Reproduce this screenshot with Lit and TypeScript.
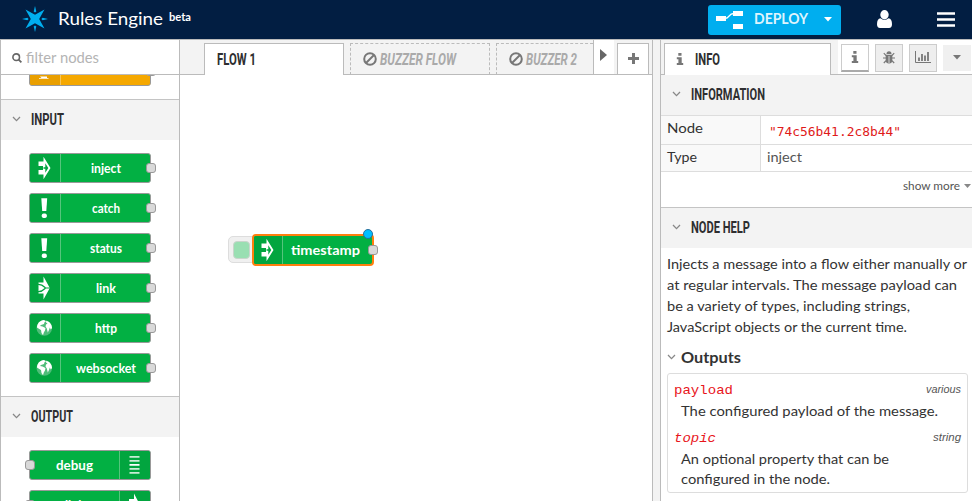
import { LitElement, html, svg, css, nothing } from "lit";
import { customElement, property } from "lit/decorators.js";

// A single line of text set to an exact advance width, capitals centred in the line box.
const line = (text: string, width: number, size: number, cls = "", height = 20) => html`
  <svg class="line" width=${width} height=${height}>
    <text class=${cls} x="0" y=${height / 2 + size * 0.36} font-size=${size}
      textLength=${width} lengthAdjust="spacingAndGlyphs">${text}</text>
  </svg>`;

const textStyles = css`
  svg { display: block; flex: none; overflow: visible; }
  .line { font-family: Lato, "Open Sans", sans-serif; fill: #333; }
  .bold { font-weight: 700; }
  .white { fill: #fff; }
  .cond { font-family: Roboto, sans-serif; font-weight: 700; fill: #2e2e30; }
  .off { fill: #aaa; font-style: italic; }
  .grey { fill: #555; }
  .hint { fill: #b4b4b4; }
`;

const chevron = html`<svg width="9" height="6" viewBox="0 0 9 6"><path d="M1 1 L4.5 4.6 L8 1" fill="none" stroke="#888" stroke-width="1.3"/></svg>`;
const caret = (w: number, h: number, fill: string) =>
  html`<svg width=${w} height=${h} viewBox="0 0 8 4" preserveAspectRatio="none"><path d="M0 0H8L4 4Z" fill=${fill}/></svg>`;
const banned = html`<svg width="14" height="14" viewBox="0 0 14 14"><circle cx="7" cy="7" r="5.8" fill="none" stroke="#777" stroke-width="2"/><path d="M3 11 L11 3" stroke="#777" stroke-width="2"/></svg>`;

const glyphs: Record<string, unknown> = {
  inject: svg`<path d="M9.5 8.5H14.5V3.8L21.5 15L14.5 26.2V21.5H9.5V17H14V13H9.5Z" fill="#fff"/><path d="M16.3 10.3L19.3 15L16.3 19.7V15.8H14.5V14.2H16.3Z" fill="#02a53f"/>`,
  alert: svg`<path d="M12.3 5.3H18.2L17.3 18H13.2Z" fill="#fff"/><rect x="12.8" y="20.5" width="5" height="4.6" rx="1.8" fill="#fff"/>`,
  link: svg`<path d="M14.5 3.6L20.8 15L14.5 26.4V20.5H9.5V9.5H14.5Z" fill="#fff"/><path d="M9 11.4C13.5 11.2 14.5 13 16.5 15C14.5 17 13.5 18.8 9 18.6M16 15H21" fill="none" stroke="#02a53f" stroke-width="1.2"/>`,
  globe: svg`<circle cx="15.3" cy="15" r="7.8" fill="#4fbd79"/><path d="M8 14.5C8 10.5 11 7.2 15 7L17 8.2L15.5 9.2L15 11L12 12L11 13L13.5 13.5L16.5 15L16 17.5L14.8 19.5L14 22.3L12.5 20L12 17L9.5 15.5Z" fill="#fff"/><path d="M17.3 7.8C20.8 8.8 23 11.5 23 15L21.8 16.5L20.8 14.5L20 17L18.8 19.5L17.8 15.5L16.5 13.5L17 11.5L18.5 10.5L17 9.5Z" fill="#fff"/>`,
  bars: svg`<path d="M10.5 6.8H20.5M10.5 10.8H20.5M10.5 18.9H20.5M10.5 22.9H20.5" stroke="#c9ecd5" stroke-width="1.8"/><path d="M10.5 14.9H20.5" stroke="#fff" stroke-width="1.8"/>`,
  out: svg`<path d="M15 3.5L21 15L15 26V20H10V9H15Z" fill="#fff"/>`,
  cut: svg`<path d="M11 20.5H18V22H19.5V22.8H10V22H12.5Z" fill="#fff"/>`,
};

@customElement("flow-node")
class FlowNode extends LitElement {
  @property() label = "";
  @property() icon = "inject";
  @property({ type: Number }) width = 30;
  @property({ type: Number }) size = 13;
  @property({ type: Boolean, reflect: true }) sink = false;
  @property({ type: Boolean, reflect: true }) selected = false;
  @property({ type: Boolean, reflect: true }) amber = false;
  static styles = [textStyles, css`
    :host { display: block; position: relative; box-sizing: border-box; width: 122px; height: 30px; }
    .body { display: flex; box-sizing: border-box; width: 100%; height: 100%; border: 1px solid #999; border-radius: 3px; background: #02b043; overflow: hidden; }
    .icon { width: 31px; box-sizing: border-box; flex: none; border-right: 1px solid #55c57c; background: #02a53f; }
    .icon svg { margin: -1px; }
    .text { flex: 1; display: flex; align-items: center; justify-content: center; }
    .port { position: absolute; right: -5px; top: 10px; width: 10px; height: 10px; box-sizing: border-box; border: 1px solid #999; border-radius: 3px; background: #d9d9d9; }
    :host([sink]) .body { flex-direction: row-reverse; }
    :host([sink]) .icon { border-right: 0; border-left: 1px solid #55c57c; }
    :host([sink]) .port { right: auto; left: -4px; }
    :host([amber]) .body { background: #f5a800; }
    :host([amber]) .icon { background: #e99f00; border-color: #f8c557; }
    :host([selected]) { height: 32px; }
    :host([selected]) .body { border: 2px solid #ff7f0e; border-radius: 4px; }
    :host([selected]) .icon { width: 29px; }
    :host([selected]) .icon svg { margin: -1px -2px; }
    :host([selected]) .port { top: 11px; right: -4px; }
    :host([selected]) .text { padding: 0 5px 1px 0; }
  `];
  render() {
    return html`
      <div class="body">
        <div class="icon"><svg width="30" height="30" viewBox="0 0 30 30">${glyphs[this.icon]}</svg></div>
        <div class="text">${this.label ? line(this.label, this.width, this.size, "bold white") : nothing}</div>
      </div>
      <div class="port"></div>`;
  }
}

@customElement("app-root")
class AppRoot extends LitElement {
  static styles = [textStyles, css`
    :host { display: flex; flex-direction: column; width: 972px; height: 501px; overflow: hidden; background: #fff; }
    * { box-sizing: border-box; }
    header { display: flex; align-items: center; height: 39px; flex: none; background: #021e42; }
    .logo { margin-left: 22px; margin-top: -1px; }
    .brand { margin: -1px 0 0 10px; }
    .beta { margin: -6px 0 0 6px; }
    .deploy { display: flex; align-items: center; width: 133px; height: 30px; margin: 1px 0 0 auto; padding-left: 8px; border-radius: 3px; background: #00aeef; }
    .deploy .line { margin: -2px 16px 0 11px; }
    .deploy .line + svg { margin-top: -1px; }
    .pale { fill: #dff4fd; }
    .user { margin: -1px 45px 0 36px; }
    .menu { margin: -1px 17px 0 0; }
    main { flex: 1; min-height: 0; display: flex; border-top: 1px solid #bbb; }

    .palette { width: 180px; display: flex; flex-direction: column; border: solid #bbb; border-width: 0 1px; }
    .search { display: flex; align-items: center; gap: 4px; height: 35px; flex: none; padding: 2px 0 0 10.5px; border-bottom: 1px solid #bbb; }
    .list { flex: 1; min-height: 0; overflow: hidden; }
    .first { display: flex; align-items: flex-start; overflow: hidden; height: 25px; padding-left: 28px; border-bottom: 1px solid #c4c4c4; }
    .first flow-node { margin-top: -19px; }
    .head { display: flex; align-items: center; gap: 10px; height: 40px; background: #f3f3f3; padding: 0 0 2px 11px; }
    .head.lined { height: 41px; border-top: 1px solid #c4c4c4; }
    .nodes { display: flex; flex-direction: column; gap: 10px; padding: 13px 0 13px 28px; }

    .work { width: 473px; display: flex; flex-direction: column; border-right: 1px solid #bbb; }
    .tabs { display: flex; align-items: flex-end; height: 35px; flex: none; background: #f3f3f3; }
    .tabs > * { flex: none; }
    .gap { align-self: stretch; width: 6px; border-bottom: 1px solid #bbb; }
    .gap.start { width: 24px; }
    .gap.thin { width: 3px; }
    .tab { display: flex; align-items: center; gap: 3px; width: 140px; height: 32px; padding: 0 0 1px 12px; border: 1px dashed #bbb; border-bottom: 1px solid #bbb; }
    .tab.on { background: #fff; border: solid #bbb; border-width: 1px 1px 0; }
    .tab.cutoff { width: 97px; border-right: 0; }
    .scroll { align-self: stretch; display: flex; align-items: center; width: 21px; padding: 0 0 4px 6px; background: #fff; border: solid #bbb; border-width: 0 0 1px 1px; }
    .add { display: flex; align-items: center; justify-content: center; width: 32px; height: 32px; padding-bottom: 1px; background: #fff; border: 1px solid #bbb; }
    .canvas { position: relative; flex: 1; }
    .trigger { position: absolute; left: 48px; top: 161px; width: 28px; height: 27px; border: 1px solid #ddd; border-radius: 5px; background: #f0f0f0; padding: 4px; }
    .trigger i { display: block; width: 17px; height: 18px; border: 1px solid #c9d5cc; border-radius: 4px; background: #99dfb2; }
    .canvas flow-node { position: absolute; left: 72px; top: 159px; }
    .dot { position: absolute; left: 183px; top: 154px; width: 10px; height: 10px; border: 1.5px solid #296f9b; border-radius: 50%; background: #00bfff; }

    .sep { width: 7px; background: #f3f3f3; }
    .side { flex: 1; min-width: 0; border-left: 1px solid #bbb; }
    .sidetabs { display: flex; align-items: flex-end; height: 35px; background: #f3f3f3; }
    .info { display: flex; align-items: center; width: 167px; height: 32px; padding: 0 0 1px 11px; gap: 11px; background: #fff; border: solid #bbb; border-width: 1px 1px 0; }
    .sidetabs .mid { width: 7px; }
    .tools { flex: 1; align-self: stretch; display: flex; align-items: center; gap: 6px; padding: 0 0 0 3px; background: #fff; border-bottom: 1px solid #bbb; }
    .tool { display: flex; align-items: center; justify-content: center; flex: none; width: 28px; height: 28px; margin-top: 2px; padding-bottom: 2px; border: 1px solid #ccc; background: #eee; }
    .tool.on { background: #fff; border-bottom: 2px solid #aaa; }
    .tool.drop { border: 0; height: 26px; margin-left: 0; background: #f0f0f0; }
    .head.s { gap: 9.5px; }
    .row { display: flex; border-top: 1px solid #ddd; height: 29px; }
    .row.two { height: 28px; border-bottom: 1px solid #ddd; }
    .key { width: 100px; padding: 2px 0 0 6px; border-right: 1px solid #ddd; background: #f9f9f9; }
    .val { padding: 2px 0 0 6px; }
    .val.code { padding: 5px 0 0 8px; }
    .mono { font-family: "DejaVu Sans Mono", monospace; fill: #e01a1a; }
    .cour { font-family: "Liberation Mono", monospace; fill: #e8151b; }
    .it { font-style: italic; }
    .arial { font-family: "Liberation Sans", sans-serif; fill: #555; font-style: italic; }
    .more { display: flex; align-items: center; justify-content: flex-end; gap: 4px; height: 35px; padding: 0 1px 8px 0; }
    .help { display: flex; flex-direction: column; padding: 5px 0 0 6px; }
    .outhead { display: flex; align-items: center; gap: 5px; height: 30px; padding: 0 0 0 6px; margin-top: 5px; }
    .box { display: flex; flex-direction: column; width: 301px; height: 120px; margin: 1px 0 0 6px; padding: 5px 6px 0 6px; border: 1px solid #ddd; border-radius: 3px; }
    .def { display: flex; justify-content: space-between; }
    .desc { margin: 2px 0 0 7px; }
    .desc + .def { margin-top: 6px; }
    .desc + .desc { margin: 0 0 0 7px; }
  `];
  render() {
    const input: [string, string, number][] = [
      ["inject", "inject", 30], ["catch", "alert", 28], ["status", "alert", 32],
      ["link", "link", 20], ["http", "globe", 22], ["websocket", "globe", 60],
    ];
    const help: [string, number][] = [
      ["Injects a message into a flow either manually or", 300],
      ["at regular intervals. The message payload can", 290],
      ["be a variety of types, including strings,", 243],
      ["JavaScript objects or the current time.", 240],
    ];
    return html`
      <header>
        <svg class="logo" width="26" height="26" viewBox="-13 -13 26 26" fill="#00aeef">
          <path d="M-9.5 -9.5L0 -4.2L9.5 -9.5L4.2 0L9.5 9.5L0 4.2L-9.5 9.5L-4.2 0Z"/>
          ${[0, 90, 180, 270].map((a) => svg`<path transform="rotate(${a})" d="M0 -13L1.3 -7.6L0 -6.4L-1.3 -7.6Z"/>`)}
        </svg>
        <div class="brand">${line("Rules Engine", 105, 18, "white")}</div>
        <div class="beta">${line("beta", 22, 11, "white bold")}</div>
        <div class="deploy">
          <svg width="27" height="18" viewBox="0 0 27 18" fill="#fff"><path d="M0 5H10V10H0ZM17 0H27V5H17ZM17 13H27V18H17Z"/><path d="M9 7.5C14 7.5 12 2.5 18 2.5" fill="none" stroke="#fff" stroke-width="1.4"/></svg>
          ${line("DEPLOY", 54, 14.5, "pale bold")}
          ${caret(8, 4.5, "#fff")}
        </div>
        <svg class="user" width="15" height="18" viewBox="0 0 15 18" fill="#fff"><ellipse cx="7.5" cy="4.7" rx="4.2" ry="4.7"/><path d="M3.5 8.2Q7.5 11.8 11.5 8.2Q15 8.6 15 14.3Q15 18 12 18H3Q0 18 0 14.3Q0 8.6 3.5 8.2Z"/></svg>
        <svg class="menu" width="18" height="15" viewBox="0 0 18 15"><path d="M0 1.5H18M0 7.5H18M0 13.5H18" stroke="#fff" stroke-width="2.6"/></svg>
      </header>
      <main>
        <section class="palette">
          <div class="search">
            <svg width="10" height="10" viewBox="0 0 10 10" fill="none" stroke="#666"><circle cx="4.2" cy="4.2" r="3.3" stroke-width="1.6"/><path d="M6.6 6.6L9.4 9.4" stroke-width="1.8"/></svg>
            ${line("filter nodes", 73, 15, "hint")}
          </div>
          <div class="list">
            <div class="first"><flow-node amber icon="cut"></flow-node></div>
            <div class="head">${chevron}${line("INPUT", 33, 17, "cond")}</div>
            <div class="nodes">${input.map(([l, i, w]) => html`<flow-node label=${l} icon=${i} width=${w}></flow-node>`)}</div>
            <div class="head lined">${chevron}${line("OUTPUT", 42, 17, "cond")}</div>
            <div class="nodes">
              <flow-node sink label="debug" icon="bars" width="37"></flow-node>
              <flow-node sink label="link" icon="out" width="20"></flow-node>
            </div>
          </div>
        </section>
        <section class="work">
          <div class="tabs">
            <div class="gap start"></div>
            <div class="tab on">${line("FLOW 1", 39, 17, "cond")}</div>
            <div class="gap"></div>
            <div class="tab">${banned}${line("BUZZER FLOW", 76, 17, "cond off")}</div>
            <div class="gap"></div>
            <div class="tab cutoff">${banned}${line("BUZZER 2", 51, 17, "cond off")}</div>
            <div class="scroll"><svg width="7" height="12" viewBox="0 0 7 12"><path d="M0 0L7 6L0 12Z" fill="#666"/></svg></div>
            <div class="gap thin"></div>
            <div class="add"><svg width="11" height="11" viewBox="0 0 11 11"><path d="M0 5.5H11M5.5 0V11" stroke="#777" stroke-width="3"/></svg></div>
            <div class="gap thin"></div>
          </div>
          <div class="canvas">
            <div class="trigger"><i></i></div>
            <flow-node selected label="timestamp" icon="inject" width="69" size="14"></flow-node>
            <div class="dot"></div>
          </div>
        </section>
        <div class="sep"></div>
        <section class="side">
          <div class="sidetabs">
            <div class="gap thin"></div>
            <div class="info">${this.info()}${line("INFO", 25, 17, "cond")}</div>
            <div class="gap mid"></div>
            <div class="tools">
              <div class="tool on">${this.info()}</div>
              <div class="tool"><svg width="12" height="13" viewBox="0 0 12 13"><path d="M3.5 3Q3.5 .3 6 .3Q8.5 .3 8.5 3Z" fill="#777"/><path d="M2.7 3.8H9.3V9Q9.3 12.6 6 12.6Q2.7 12.6 2.7 9Z" fill="#777"/><path d="M0 7H12M.8 2.2L3.4 4.8M11.2 2.2L8.6 4.8M.8 12L3.4 9.4M11.2 12L8.6 9.4" stroke="#777" stroke-width="1.2"/><path d="M6 5V12" stroke="#eee" stroke-width=".8"/></svg></div>
              <div class="tool"><svg width="16" height="12" viewBox="0 0 16 12"><path d="M.5 0V11.5H16" fill="none" stroke="#777"/><path d="M4 10V6.5M7 10V3M10 10V4.5M13 10V1" stroke="#777" stroke-width="1.8"/></svg></div>
              <div class="tool drop">${caret(8, 4.5, "#777")}</div>
            </div>
          </div>
          <div class="head s">${chevron}${line("INFORMATION", 74, 17, "cond")}</div>
          <div class="row"><div class="key">${line("Node", 36, 14)}</div><div class="val code">${line('"74c56b41.2c8b44"', 132, 12.5, "mono")}</div></div>
          <div class="row two"><div class="key">${line("Type", 30, 14)}</div><div class="val">${line("inject", 35, 14, "grey")}</div></div>
          <div class="more">${line("show more", 57, 12, "grey")}${caret(7, 4, "#888")}</div>
          <div class="head s lined">${chevron}${line("NODE HELP", 59, 17, "cond")}</div>
          <div class="help">${help.map(([t, w]) => line(t, w, 14, "", 21))}</div>
          <div class="outhead">${chevron}${line("Outputs", 60, 15.5, "bold")}</div>
          <div class="box">
            <div class="def">${line("payload", 59, 13.5, "cour")}${line("various", 35, 11, "arial")}</div>
            <div class="desc">${line("The configured payload of the message.", 257, 14)}</div>
            <div class="def">${line("topic", 42, 13.5, "cour it")}${line("string", 28, 11, "arial")}</div>
            <div class="desc">${line("An optional property that can be", 208, 14)}</div>
            <div class="desc">${line("configured in the node.", 149, 14)}</div>
          </div>
        </section>
      </main>`;
  }
  info() {
    return html`<svg width="8" height="12" viewBox="0 0 8 12" fill="#777"><path d="M2.3 0H5.5V2.8H2.3ZM.8 4.3H5.7V10H7.2V12H.8V10H2.4V6.2H.8Z"/></svg>`;
  }
}
